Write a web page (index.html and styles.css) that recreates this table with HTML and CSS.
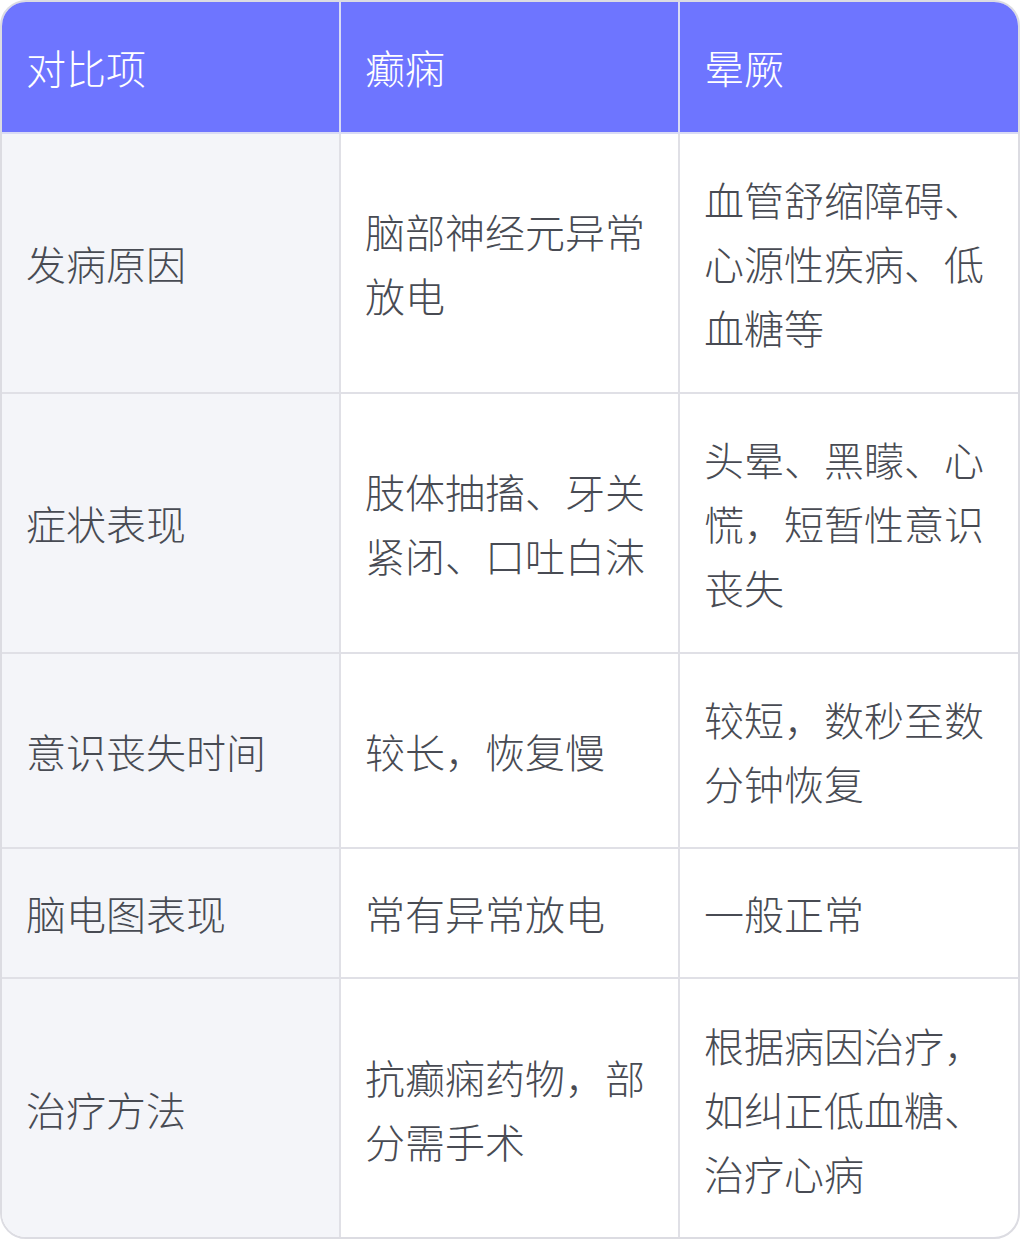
FILE: index.html
```html
<!DOCTYPE html>
<html lang="zh">
<head>
<meta charset="utf-8">
<link rel="stylesheet" href="styles.css">
</head>
<body>
<div class="card">
<table class="cmp">
<colgroup><col class="c1"><col class="c2"><col class="c3"></colgroup>
<thead>
<tr><th>对比项</th><th>癫痫</th><th>晕厥</th></tr>
</thead>
<tbody>
<tr class="r3"><td class="key">发病原因</td><td>脑部神经元异常放电</td><td>血管舒缩障碍、心源性疾病、低血糖等</td></tr>
<tr class="r3"><td class="key">症状表现</td><td>肢体抽搐、牙关紧闭、口吐白沫</td><td>头晕、黑矇、心慌，短暂性意识丧失</td></tr>
<tr class="r2"><td class="key">意识丧失时间</td><td>较长，恢复慢</td><td>较短，数秒至数分钟恢复</td></tr>
<tr class="r1"><td class="key">脑电图表现</td><td>常有异常放电</td><td>一般正常</td></tr>
<tr class="r3 last"><td class="key">治疗方法</td><td>抗癫痫药物，部分需手术</td><td>根据病因治疗，如纠正低血糖、治疗心病</td></tr>
</tbody>
</table>
</div>
</body>
</html>
```

FILE: styles.css
```css
html, body {
  margin: 0;
  padding: 0;
  background: #ffffff;
}
.card {
  width: 1020px;
  height: 1239px;
  box-sizing: border-box;
  border: 2px solid #dcdce2;
  border-radius: 26px;
  overflow: hidden;
  background: #ffffff;
}
.cmp {
  width: 100%;
  border-collapse: collapse;
  table-layout: fixed;
  font-family: "Noto Sans CJK SC", "Noto Sans", sans-serif;
  font-size: 40px;
  line-height: 64px;
  color: #484b53;
}
.c1 { width: 338px; }
.c2 { width: 339px; }
.c3 { width: 339px; }
.cmp th, .cmp td {
  padding: 32px 24px;
  text-align: left;
  vertical-align: middle;
  border: 2px solid #e0e0e6;
  font-weight: 300;
  word-break: break-all;
}
.cmp tr > *:first-child { border-left: none; }
.cmp tr > *:last-child { border-right: none; }
.cmp thead th { border-top: none; }
.cmp tbody tr:last-child td { border-bottom: none; }
.cmp th {
  background: #6e75ff;
  color: #ffffff;
  border-color: #d9dbf5;
}
.cmp td.key {
  background: #f4f5f9;
}
.cmp thead th { height: 66px; }
.cmp .r3 td { height: 194px; }
.cmp .r2 td { height: 129px; }
.cmp .r1 td { height: 64px; }
.cmp .r3.last td { height: 196px; }
```
